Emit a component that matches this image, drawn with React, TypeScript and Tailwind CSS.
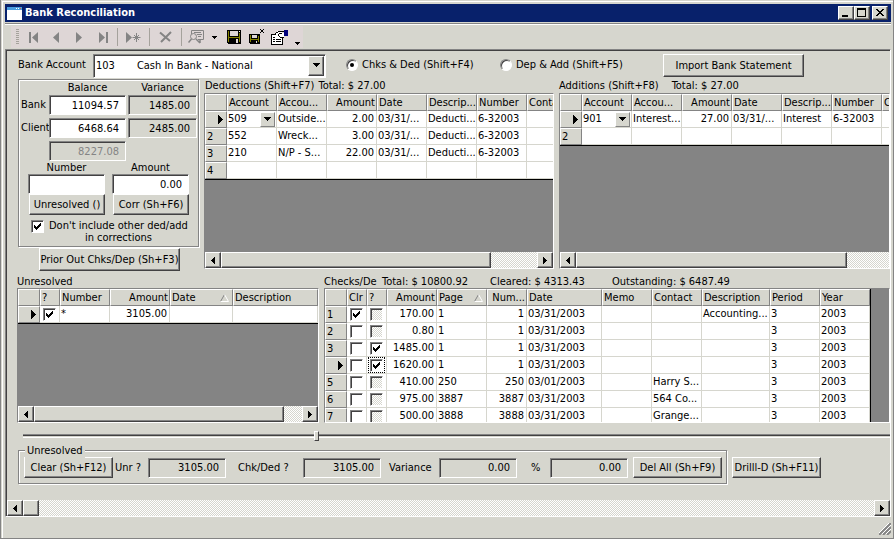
import { useState } from 'react';
import type { ReactNode } from 'react';
import { clsx } from 'clsx';

// ─── Shared bevels ──────────────────────────────────────────
const RAISED =
  'border border-t-white border-l-white border-b-[#424142] border-r-[#424142] bg-[#d6d6ce] shadow-[inset_-1px_-1px_0_#848484]';
const SUNKEN =
  'border border-t-[#848484] border-l-[#848484] border-b-white border-r-white shadow-[inset_1px_1px_0_#424142]';
const ETCHED = 'border border-[#848484] shadow-[1px_1px_0_#fff,inset_1px_1px_0_#fff]';
const DITHER = 'bg-[repeating-conic-gradient(#fff_0_25%,#d6d6ce_0_50%)] bg-[size:2px_2px]';

type Align = 'left' | 'right';

interface Column {
  title: string;
  width: string;
  align?: Align;
  sorted?: boolean;
}

// ─── Small controls ─────────────────────────────────────────
function PushButton({ children, className }: { children: ReactNode; className?: string }) {
  return (
    <button type="button" className={clsx(RAISED, 'shrink-0 text-center whitespace-nowrap leading-4', className)}>
      {children}
    </button>
  );
}

function Triangle({ dir }: { dir: 'left' | 'right' | 'down' }) {
  const d = {
    left: 'M4 0h1v7H4zM3 1h1v5H3zM2 2h1v3H2zM1 3h1v1H1z',
    right: 'M1 0h1v7H1zM2 1h1v5H2zM3 2h1v3H3zM4 3h1v1H4z',
    down: 'M0 1h7v1H0zM1 2h5v1H1zM2 3h3v1H2zM3 4h1v1H3z',
  }[dir];
  return (
    <svg width={dir === 'down' ? 7 : 6} height="7" shapeRendering="crispEdges" className="shrink-0" aria-hidden="true">
      <path d={d} />
    </svg>
  );
}

function CheckBox({ id, label, checked, dim }: { id: string; label?: string; checked?: boolean; dim?: boolean }) {
  return (
    <span className="inline-grid shrink-0 align-top">
      <input
        id={id}
        type="checkbox"
        aria-label={label}
        defaultChecked={checked}
        className={clsx(
          SUNKEN,
          'peer col-start-1 row-start-1 m-0 size-[13px] appearance-none border-r-[#d6d6ce] border-b-[#d6d6ce]',
          dim ? DITHER : 'bg-white'
        )}
      />
      <svg
        width="13"
        height="13"
        shapeRendering="crispEdges"
        className="pointer-events-none invisible col-start-1 row-start-1 peer-checked:visible"
        aria-hidden="true"
      >
        <path d="M3 5h1v3H3zM4 6h1v3H4zM5 7h1v3H5zM6 6h1v3H6zM7 5h1v3H7zM8 4h1v3H8zM9 3h1v3H9z" />
      </svg>
    </span>
  );
}

function RadioOption({ label, checked, onSelect }: { label: string; checked: boolean; onSelect: () => void }) {
  return (
    <label className="flex shrink-0 items-center gap-1 whitespace-nowrap">
      <span className="grid">
        <input
          type="radio"
          name="side"
          checked={checked}
          onChange={onSelect}
          className="peer col-start-1 row-start-1 m-0 size-3 appearance-none rounded-full border border-t-[#848484] border-r-white border-b-white border-l-[#848484] bg-white shadow-[inset_1px_1px_0_#424142]"
        />
        <svg width="12" height="12" className="pointer-events-none invisible col-start-1 row-start-1 peer-checked:visible" aria-hidden="true">
          <circle cx="6" cy="6" r="2" />
        </svg>
      </span>
      {label}
    </label>
  );
}

function AmountBox({
  id,
  value,
  label,
  tone = 'edit',
  className,
}: {
  id: string;
  value: string;
  label?: string;
  tone?: 'edit' | 'readonly' | 'disabled';
  className?: string;
}) {
  return (
    <input
      id={id}
      type="text"
      aria-label={label}
      defaultValue={value}
      readOnly={tone === 'readonly'}
      disabled={tone === 'disabled'}
      className={clsx(
        SUNKEN,
        'h-5 min-w-0 shrink-0 pr-[6px] text-right leading-4',
        tone === 'edit' ? 'bg-white' : 'bg-[#d6d6ce]',
        tone === 'disabled' && 'text-[#848484]',
        className
      )}
    />
  );
}

function ScrollBar({ thumb, track, endArrow = true }: { thumb: number; track: number; endArrow?: boolean }) {
  return (
    <div className={clsx('flex h-4 shrink-0', DITHER)}>
      <button type="button" aria-label="Scroll left" className={clsx(RAISED, 'flex w-4 shrink-0 items-center justify-center')}>
        <Triangle dir="left" />
      </button>
      <div className={RAISED} style={{ flexGrow: thumb }} />
      <div style={{ flexGrow: track }} />
      {endArrow && (
        <button type="button" aria-label="Scroll right" className={clsx(RAISED, 'flex w-4 shrink-0 items-center justify-center')}>
          <Triangle dir="right" />
        </button>
      )}
    </div>
  );
}

// ─── Data grid ──────────────────────────────────────────────
interface GridProps {
  columns: Column[];
  rows: ReactNode[][];
  current: number;
  label: string;
  height: string;
  fill?: boolean;
  edge?: boolean;
  scroll?: ReactNode;
}

function DataGrid({ columns, rows, current, label, height, fill, edge, scroll }: GridProps) {
  return (
    <div className={clsx('flex flex-col overflow-hidden border border-t-[#848484] border-l-[#848484] border-r-white border-b-white bg-[#848484]', height)}>
      <div className="min-h-0 flex-1 overflow-hidden">
        <table
          aria-label={label}
          className={clsx(
            'table-fixed border-separate border-spacing-0 border-black bg-white',
            fill ? 'w-full' : 'w-0',
            edge ? 'border-r' : 'border-b'
          )}
        >
          <thead>
            <tr className="h-[17px]">
              <th className="w-[22px] border border-t-white border-r-[#848484] border-b-[#848484] border-l-white bg-[#d6d6ce] p-0" />
              {columns.map((col, i) => (
                <th
                  key={i}
                  className={clsx(
                    'overflow-hidden border border-t-white border-r-[#848484] border-b-[#848484] border-l-white bg-[#d6d6ce] p-0 px-px leading-[15px] font-normal whitespace-nowrap',
                    col.width,
                    col.align === 'right' ? 'text-right' : 'text-left'
                  )}
                >
                  {col.sorted ? (
                    <span className="flex items-center justify-between pr-[2px]">
                      {col.title}
                      <svg width="9" height="8" className="shrink-0" aria-hidden="true">
                        <path d="M.5 7.5 4.5 .5" stroke="#848484" fill="none" />
                        <path d="M4.5 .5 8.5 7.5H.5" stroke="#fff" fill="none" />
                      </svg>
                    </span>
                  ) : (
                    col.title
                  )}
                </th>
              ))}
            </tr>
          </thead>
          <tbody>
            {rows.map((row, r) => (
              <tr key={r} className="h-[17px]">
                <th className="border border-t-white border-r-[#848484] border-b-[#848484] border-l-white bg-[#d6d6ce] p-0 pl-px text-left leading-[15px] font-normal">
                  {r === current ? (
                    <span className="flex justify-end pr-[3px]">
                      <svg width="5" height="9" shapeRendering="crispEdges" aria-label="Current row">
                        <path d="M0 0h1v9H0zM1 1h1v7H1zM2 2h1v5H2zM3 3h1v3H3zM4 4h1v1H4z" />
                      </svg>
                    </span>
                  ) : (
                    r + 1
                  )}
                </th>
                {columns.map((col, c) => (
                  <td
                    key={c}
                    className={clsx(
                      'overflow-hidden border-r border-b border-[#d6d6ce] p-0 leading-4 whitespace-nowrap',
                      col.align === 'right' ? 'pr-[2px] text-right' : 'px-px text-left'
                    )}
                  >
                    {row[c]}
                  </td>
                ))}
              </tr>
            ))}
          </tbody>
        </table>
      </div>
      {scroll}
    </div>
  );
}

function AccountCell({ value }: { value: string }) {
  return (
    <span className="flex h-4 items-center justify-between">
      {value}
      <button type="button" aria-label="Choose account" className="flex size-[15px] items-center justify-center border border-t-white border-r-[#848484] border-b-[#848484] border-l-white bg-[#d6d6ce]">
        <Triangle dir="down" />
      </button>
    </span>
  );
}

const ENTRY_COLUMNS: Column[] = [
  { title: 'Account', width: 'w-[50px]' },
  { title: 'Accou...', width: 'w-[50px]' },
  { title: 'Amount', width: 'w-[50px]', align: 'right' },
  { title: 'Date', width: 'w-[50px]' },
  { title: 'Descrip...', width: 'w-[50px]' },
  { title: 'Number', width: 'w-[50px]' },
  { title: 'Contact', width: 'w-[50px]' },
];

const DEDUCTIONS: ReactNode[][] = [
  [<AccountCell value="509" />, 'Outside...', '2.00', '03/31/...', 'Deducti...', '6-32003'],
  ['552', 'Wreck...', '3.00', '03/31/...', 'Deducti...', '6-32003'],
  ['210', 'N/P - S...', '22.00', '03/31/...', 'Deducti...', '6-32003'],
  [],
];

const ADDITIONS: ReactNode[][] = [
  [<AccountCell value="901" />, 'Interest...', '27.00', '03/31/...', 'Interest', '6-32003'],
  [],
];

const UNRESOLVED_COLUMNS: Column[] = [
  { title: '?', width: 'w-[20px]' },
  { title: 'Number', width: 'w-[50px]' },
  { title: 'Amount', width: 'w-[60px]', align: 'right' },
  { title: 'Date', width: 'w-[63px]', sorted: true },
  { title: 'Description', width: 'w-auto' },
];

const CHECK_COLUMNS: Column[] = [
  { title: 'Clr', width: 'w-[20px]' },
  { title: '?', width: 'w-[20px]' },
  { title: 'Amount', width: 'w-[50px]', align: 'right' },
  { title: 'Page', width: 'w-[50px]', sorted: true },
  { title: 'Num...', width: 'w-[40px]', align: 'right' },
  { title: 'Date', width: 'w-[75px]' },
  { title: 'Memo', width: 'w-[50px]' },
  { title: 'Contact', width: 'w-[50px]' },
  { title: 'Description', width: 'w-[68px]' },
  { title: 'Period', width: 'w-[50px]' },
  { title: 'Year', width: 'w-[50px]' },
];

interface Check {
  cleared?: boolean;
  flagged?: boolean;
  amount: string;
  page: string;
  date: string;
  contact?: string;
  description?: string;
}

const CHECKS: Check[] = [
  { cleared: true, amount: '170.00', page: '1', date: '03/31/2003', description: 'Accounting...' },
  { amount: '0.80', page: '1', date: '03/31/2003' },
  { flagged: true, amount: '1485.00', page: '1', date: '03/31/2003' },
  { flagged: true, amount: '1620.00', page: '1', date: '03/31/2003' },
  { amount: '410.00', page: '250', date: '03/01/2003', contact: 'Harry S...' },
  { amount: '975.00', page: '3887', date: '03/31/2003', contact: '564 Co...' },
  { amount: '500.00', page: '3888', date: '03/31/2003', contact: 'Grange...' },
];

const CURRENT_CHECK = 3;

const CHECK_ROWS: ReactNode[][] = CHECKS.map((c, i) => [
  <span className="flex h-4 items-center justify-center">
    <CheckBox id={`clr-${i}`} label="Cleared" checked={c.cleared} />
  </span>,
  <span className={clsx('flex h-4 items-center justify-center', i === CURRENT_CHECK && 'outline-1 -outline-offset-1 outline-dotted outline-black')}>
    <CheckBox id={`flag-${i}`} label="Unresolved" checked={c.flagged} dim={!c.flagged} />
  </span>,
  c.amount,
  c.page,
  c.page,
  c.date,
  '',
  c.contact,
  c.description,
  '3',
  '2003',
]);

// ─── Toolbar ────────────────────────────────────────────────
function Tool({ label, width, children }: { label: string; width: string; children: ReactNode }) {
  return (
    <button type="button" aria-label={label} className={clsx('flex h-full shrink-0 items-center justify-center', width)}>
      {children}
    </button>
  );
}

function Divider() {
  return <span className="mx-[3px] h-[18px] w-px shrink-0 bg-[#a5a29c]" />;
}

function ToolBar() {
  return (
    <div className="flex h-[22px] w-[292px] items-center bg-[#ded6d6]">
      <span className="ml-[5px] h-4 w-[3px] shrink-0 bg-[repeating-linear-gradient(#a5a29c_0_1px,transparent_1px_2px)]" />
      <span className="w-[3px] shrink-0" />
      <Tool label="First" width="w-[23px]">
        <svg width="10" height="11" fill="#848484"><path d="M0 0h2v11H0zM9 0v11L3 5.5z" /></svg>
      </Tool>
      <Tool label="Previous" width="w-[23px]">
        <svg width="7" height="11" fill="#848484"><path d="M6 0v11L0 5.5z" /></svg>
      </Tool>
      <Tool label="Next" width="w-[23px]">
        <svg width="7" height="11" fill="#848484"><path d="M0 0v11l6-5.5z" /></svg>
      </Tool>
      <Tool label="Last" width="w-[23px]">
        <svg width="10" height="11" fill="#848484"><path d="M8 0h2v11H8zM1 0v11l6-5.5z" /></svg>
      </Tool>
      <Divider />
      <Tool label="New" width="w-[25px]">
        <svg width="15" height="11" fill="#848484">
          <path d="M0 0v11l6-5.5z" />
          <path d="M10.500 1v9M6.500 5.500h8M8 3l5 5M13 3 8 8" stroke="#848484" fill="none" />
        </svg>
      </Tool>
      <Divider />
      <Tool label="Delete" width="w-[25px]">
        <svg width="13" height="12" fill="none" stroke="#848484">
          <path d="M1 1.500 11 10M12 1 2 11" strokeWidth="2" />
        </svg>
      </Tool>
      <Divider />
      <Tool label="Find" width="w-[22px]">
        <svg width="17" height="14" fill="none" stroke="#848484">
          <path d="M3.500 4V.5h12v9H10M6 2.500h7M9 4.500h5M10 6.500h3" />
          <circle cx="5.500" cy="6.500" r="3" />
          <path d="M3.500 9 .5 12.500M8 9l4 4M12 10v3" strokeWidth="1.500" />
        </svg>
      </Tool>
      <Tool label="Find options" width="w-[15px]">
        <svg width="5" height="3" shapeRendering="crispEdges"><path d="M0 0h5v1H0zM1 1h3v1H1zM2 2h1v1H2z" /></svg>
      </Tool>
      <Tool label="Save" width="w-[23px]">
        <svg width="14" height="14" shapeRendering="crispEdges">
          <path d="M0 0h14v14H1L0 13z" />
          <path d="M1 1h1v11H1zM12 3h1v9h-1zM2 7h10v1H2z" fill="#848200" />
          <path d="M3 1h8v5H3zM9 9h2v4H9z" fill="#ded6d6" />
          <path d="M12 1h1v1h-1z" fill="#fff" />
        </svg>
      </Tool>
      <Tool label="Save and close" width="w-[23px]">
        <svg width="16" height="16" shapeRendering="crispEdges">
          <path d="M0 5h11v10H1L0 14z" />
          <path d="M1 6h1v7H1zM9 7h1v6H9zM2 10h7v1H2z" fill="#848200" />
          <path d="M3 6h5v3H3zM7 12h1v2H7z" fill="#ded6d6" />
          <path d="M11 0h1v1h-1zM12 1h1v1h-1zM13 2h1v1h-1zM14 3h1v1h-1zM14 0h1v1h-1zM13 1h1v1h-1zM12 2h1v1h-1zM11 3h1v1h-1z" />
        </svg>
      </Tool>
      <Tool label="Properties" width="w-[23px]">
        <svg width="17" height="15" shapeRendering="crispEdges">
          <path d="M.5 4.500h11v10H.5z" fill="#fff" stroke="#000" />
          <path d="M2 9h2v1H2zM5 9h5v1H5zM2 11h2v1H2zM5 11h5v1H5zM2 7h2v1H2z" />
          <path d="M3 5h1V3h2V1h8v1h-3v1h2v5H9V7H7V5z" fill="#fff" />
          <path d="M4 3h1v2H4zM5 2h2v1H5zM7 1h6v1H7zM8 3h3v1H8zM7 4h1v2H7zM8 6h1v1H8zM9 7h4v1H9z" />
          <path d="M13 0h4v6h-4z" fill="#00007b" />
        </svg>
      </Tool>
      <Tool label="Toolbar options" width="w-[13px]">
        <svg width="5" height="16" shapeRendering="crispEdges"><path d="M0 13h5v1H0zM1 14h3v1H1zM2 15h1v1H2z" /></svg>
      </Tool>
    </div>
  );
}

function TitleBar() {
  return (
    <header className="flex h-[18px] items-center bg-[#08216b] pr-[3px] pl-[2px] text-white">
      <svg width="15" height="13" shapeRendering="crispEdges" className="shrink-0" aria-hidden="true">
        <path d="M0 0h15v13H0z" fill="#fff" />
        <path d="M0 0h15v3H0z" fill="#4a9ede" />
        <path d="M9 1h1v1H9zM11 1h1v1h-1z" fill="#fff" />
        <path d="M13 1h1v1h-1z" fill="#e75a21" />
      </svg>
      <h1 className="ml-[3px] flex-1 text-[11px] leading-4 font-bold">Bank Reconciliation</h1>
      <button type="button" aria-label="Minimize" className={clsx(RAISED, 'h-[14px] w-4')}>
        <svg width="14" height="12" shapeRendering="crispEdges"><path d="M3 8h6v2H3z" /></svg>
      </button>
      <button type="button" aria-label="Maximize" className={clsx(RAISED, 'mr-[2px] h-[14px] w-4')}>
        <svg width="14" height="12" shapeRendering="crispEdges"><path d="M2 1h9v9H2zM3 3v6h7V3z" fillRule="evenodd" /></svg>
      </button>
      <button type="button" aria-label="Close" className={clsx(RAISED, 'h-[14px] w-4')}>
        <svg width="14" height="12" shapeRendering="crispEdges">
          <path d="M3 2h2v1H3zM4 3h2v1H4zM5 4h4v1H5zM6 5h2v1H6zM5 6h4v1H5zM4 7h2v1H4zM3 8h2v1H3zM9 2h2v1H9zM8 3h2v1H8zM8 7h2v1H8zM9 8h2v1H9z" />
        </svg>
      </button>
    </header>
  );
}

// ─── Panels ─────────────────────────────────────────────────
function AccountRow() {
  const [side, setSide] = useState<'ded' | 'add'>('ded');

  return (
    <div className="flex h-7 items-center pt-px pl-[11px]">
      <label htmlFor="account" className="w-[75px] shrink-0 pb-[2px]">Bank Account</label>
      <div className="grid w-[233px] shrink-0">
        <select id="account" className={clsx(SUNKEN, 'col-start-1 row-start-1 h-6 w-full appearance-none bg-white pl-[2px]')}>
          <option>{'103\u00a0\u00a0\u00a0\u00a0\u00a0\u00a0\u00a0Cash In Bank - National'}</option>
        </select>
        <span className={clsx(RAISED, 'pointer-events-none col-start-1 row-start-1 mr-[2px] flex h-5 w-4 items-center justify-center self-center justify-self-end')}>
          <Triangle dir="down" />
        </span>
      </div>
      <div className="ml-5 w-[154px] shrink-0 pb-[2px]">
        <RadioOption label="Chks & Ded (Shift+F4)" checked={side === 'ded'} onSelect={() => setSide('ded')} />
      </div>
      <div className="w-[163px] shrink-0 pb-[2px]">
        <RadioOption label="Dep & Add (Shift+F5)" checked={side === 'add'} onSelect={() => setSide('add')} />
      </div>
      <PushButton className="h-[23px] w-[141px]">Import Bank Statement</PushButton>
    </div>
  );
}

function BalancePanel() {
  return (
    <div>
      <div className={clsx(ETCHED, 'h-[168px] pl-[2px]')}>
        <div className="grid grid-cols-[26px_77px_69px] items-center gap-x-[2px] gap-y-[3px]">
          <span />
          <span className="-mb-[3px] pt-px text-center leading-[14px]">Balance</span>
          <span className="-mb-[3px] pt-px text-center leading-[14px]">Variance</span>
          <label htmlFor="bank">Bank</label>
          <AmountBox id="bank" value="11094.57" />
          <AmountBox id="bank-var" label="Bank variance" value="1485.00" tone="readonly" />
          <label htmlFor="client">Client</label>
          <AmountBox id="client" value="6468.64" />
          <AmountBox id="client-var" label="Client variance" value="2485.00" tone="readonly" />
          <span />
          <AmountBox id="computed" label="Computed balance" value="8227.08" tone="disabled" />
        </div>
        <div className="ml-[7px] grid grid-cols-[77px_77px] gap-x-[7px]">
          <label htmlFor="number" className="text-center leading-[13px]">Number</label>
          <label htmlFor="amount" className="text-center leading-[13px]">Amount</label>
          <AmountBox id="number" value="" />
          <AmountBox id="amount" value="0.00" />
          <PushButton className="ml-px h-[21px]">Unresolved ()</PushButton>
          <PushButton className="ml-px h-[21px]">Corr (Sh+F6)</PushButton>
        </div>
        <div className="mt-[5px] flex gap-[5px] pl-[10px]">
          <CheckBox id="exclude" checked />
          <label htmlFor="exclude" className="text-center leading-3 whitespace-nowrap">
            Don't include other ded/add
            <br />
            in corrections
          </label>
        </div>
      </div>
      <PushButton className="mt-px ml-[21px] h-[23px] w-[141px]">Prior Out Chks/Dep (Sh+F3)</PushButton>
    </div>
  );
}

function UnresolvedBar() {
  return (
    <div className="mt-[2px] flex items-end gap-[5px] pl-[11px]">
      <fieldset className={clsx(ETCHED, 'relative mt-[7px] flex h-[34px] w-[709px] shrink-0 items-center pt-px pl-[5px]')}>
        <legend className="absolute -top-2 left-[6px] bg-[#d6d6ce] px-[2px] leading-4">Unresolved</legend>
        <PushButton className="h-[21px] w-[89px]">Clear (Sh+F12)</PushButton>
        <label htmlFor="unr" className="w-[35px] shrink-0 pl-[2px] whitespace-nowrap">Unr ?</label>
        <AmountBox id="unr" value="3105.00" tone="readonly" className="w-[78px]" />
        <label htmlFor="chk" className="w-[77px] shrink-0 pl-3 whitespace-nowrap">Chk/Ded ?</label>
        <AmountBox id="chk" value="3105.00" tone="readonly" className="w-[78px]" />
        <label htmlFor="variance" className="w-[58px] shrink-0 pl-2">Variance</label>
        <AmountBox id="variance" value="0.00" tone="readonly" className="w-[78px]" />
        <label htmlFor="pct" className="w-[33px] shrink-0 pl-[14px]">%</label>
        <AmountBox id="pct" value="0.00" tone="readonly" className="w-[78px]" />
        <PushButton className="ml-[5px] h-[21px] w-[89px]">Del All (Sh+F9)</PushButton>
      </fieldset>
      <PushButton className="mb-[6px] h-[21px] w-[89px]">Drilll-D (Sh+F11)</PushButton>
    </div>
  );
}

export default function App() {
  const unresolvedRows: ReactNode[][] = [
    [
      <span className="flex h-4 items-center justify-center">
        <CheckBox id="unresolved-0" label="Include" checked />
      </span>,
      '*',
      '3105.00',
    ],
  ];

  return (
    <div className="flex min-h-screen flex-col overflow-hidden border-r border-b border-l border-[#848484] bg-[#d6d6ce] pt-px font-['DejaVu_Sans_Condensed','DejaVu_Sans',Tahoma,sans-serif] text-[11px] leading-4 text-black">
      <div className="ml-px flex flex-1 flex-col border-t border-l border-white pt-[2px] pr-[2px] pl-[2px]">
        <TitleBar />
        <div className="mt-px h-[2px] border-t border-[#848484] bg-white" />
        <div className="flex h-[24px] items-center pl-[6px]">
          <ToolBar />
        </div>

        <main className="flex flex-1 flex-col overflow-hidden border border-t-[#848484] border-r-white border-b-white border-l-[#848484] shadow-[inset_1px_1px_0_#424142]">
          <div className="flex flex-1 flex-col pt-px pl-px">
            <AccountRow />

            <div className="grid grid-cols-[181px_minmax(0,350fr)_minmax(0,331fr)] gap-x-[5px] pl-[11px]">
              <BalancePanel />
              <section>
                <h2 className="flex h-[14px] items-center gap-1 pl-px whitespace-nowrap">
                  <span>Deductions (Shift+F7)</span>
                  <span>Total: $ 27.00</span>
                </h2>
                <DataGrid
                  label="Deductions"
                  columns={ENTRY_COLUMNS}
                  rows={DEDUCTIONS}
                  current={0}
                  height="h-[176px]"
                  scroll={<ScrollBar thumb={271} track={46} />}
                />
              </section>
              <section>
                <h2 className="flex h-[14px] items-center gap-[13px] whitespace-nowrap">
                  <span>Additions (Shift+F8)</span>
                  <span>Total: $ 27.00</span>
                </h2>
                <DataGrid
                  label="Additions"
                  columns={ENTRY_COLUMNS}
                  rows={ADDITIONS}
                  current={0}
                  height="h-[176px]"
                  scroll={<ScrollBar thumb={271} track={42} endArrow={false} />}
                />
              </section>
            </div>

            <div className="mt-1 grid grid-cols-[minmax(0,302fr)_minmax(0,566fr)] gap-x-[5px] pl-[10px]">
              <section>
                <h2 className="h-[13px] leading-[13px]">Unresolved</h2>
                <DataGrid
                  label="Unresolved"
                  columns={UNRESOLVED_COLUMNS}
                  rows={unresolvedRows}
                  current={0}
                  height="h-[135px]"
                  fill
                  scroll={<ScrollBar thumb={250} track={18} />}
                />
              </section>
              <section>
                <h2 className="flex h-[13px] items-center whitespace-nowrap">
                  <span className="w-[58px]">Checks/De</span>
                  <span className="w-[108px]">Total: $ 10800.92</span>
                  <span className="w-[122px]">Cleared: $ 4313.43</span>
                  <span>Outstanding: $ 6487.49</span>
                </h2>
                <DataGrid label="Checks" columns={CHECK_COLUMNS} rows={CHECK_ROWS} current={CURRENT_CHECK} height="h-[135px]" edge />
              </section>
            </div>

            <input
              type="range"
              aria-label="Scroll lists"
              max={1000}
              defaultValue={338}
              className="mt-[7px] ml-4 h-[11px] appearance-none bg-transparent [&::-webkit-slider-runnable-track]:h-1 [&::-webkit-slider-runnable-track]:border-t [&::-webkit-slider-runnable-track]:border-b [&::-webkit-slider-runnable-track]:border-t-[#848484] [&::-webkit-slider-runnable-track]:border-b-white [&::-webkit-slider-runnable-track]:bg-[linear-gradient(#424142_50%,#d6d6ce_50%)] [&::-webkit-slider-thumb]:-mt-1 [&::-webkit-slider-thumb]:h-[10px] [&::-webkit-slider-thumb]:w-[5px] [&::-webkit-slider-thumb]:appearance-none [&::-webkit-slider-thumb]:border [&::-webkit-slider-thumb]:border-t-white [&::-webkit-slider-thumb]:border-r-[#424142] [&::-webkit-slider-thumb]:border-b-[#424142] [&::-webkit-slider-thumb]:border-l-white [&::-webkit-slider-thumb]:bg-[#d6d6ce]"
            />

            <UnresolvedBar />

            <div className="mt-auto pt-[14px]">
              <ScrollBar thumb={1} track={59} />
            </div>
          </div>
        </main>

        <footer className="flex h-[21px] items-end justify-end pb-[3px]">
          <svg width="12" height="12" stroke="#848484" aria-hidden="true">
            <path d="M0 12 12 0M4 12l8-8M8 12l4-4" strokeWidth="2" />
            <path d="M-1 11 11-1M3 11l9-9M7 11l5-5" stroke="#fff" />
          </svg>
        </footer>
      </div>
    </div>
  );
}
